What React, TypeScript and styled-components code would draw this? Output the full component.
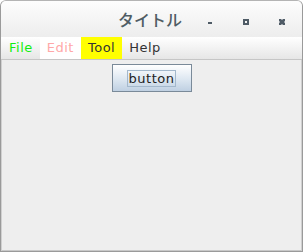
import React from 'react';
import styled, { createGlobalStyle } from 'styled-components';

const GlobalStyle = createGlobalStyle`
  html, body {
    margin: 0;
    padding: 0;
    background: #ffffff;
  }
  body {
    font-family: "DejaVu Sans", sans-serif;
  }
`;

const menus = [
  { label: 'File', color: '#11ee11', bg: 'transparent' },
  { label: 'Edit', color: '#ffa8a8', bg: '#ffffff' },
  { label: 'Tool', color: '#333333', bg: '#ffff00' },
  { label: 'Help', color: '#333333', bg: 'transparent' },
];

const App: React.FC = () => {
  return (
    <>
      <GlobalStyle />
      <Frame>
        <TitleBar>
          <Title>タイトル</Title>
          <Controls>
            <Control>
              <svg width="6" height="6" viewBox="0 0 6 6">
                <rect x="1" y="3" width="4" height="2" fill="#4f5b66" />
              </svg>
            </Control>
            <Control>
              <svg width="6" height="6" viewBox="0 0 6 6">
                <rect x="1" y="1" width="4" height="4" fill="none" stroke="#4f5b66" strokeWidth="2" />
              </svg>
            </Control>
            <Control>
              <svg width="6" height="6" viewBox="0 0 6 6">
                <path d="M0 0h2l1 1 1-1h2v2l-1 1 1 1v2h-2l-1-1-1 1h-2v-2l1-1-1-1z" fill="#4f5b66" />
              </svg>
            </Control>
          </Controls>
        </TitleBar>
        <MenuBar>
          {menus.map((m) => (
            <MenuItem key={m.label} $color={m.color} $bg={m.bg}>
              {m.label}
            </MenuItem>
          ))}
        </MenuBar>
        <Content>
          <Button>
            <FocusRing>button</FocusRing>
          </Button>
        </Content>
      </Frame>
    </>
  );
};

export default App;

// Styled components

const Frame = styled.div`
  width: 303px;
  height: 252px;
  box-sizing: border-box;
  border: 1px solid #9a9a9a;
  border-top-color: #b4b4b4;
  border-radius: 6px 6px 0 0;
  box-shadow: inset 1px 0 0 #d0d0d0, inset -1px 0 0 #d0d0d0, inset 0 -1px 0 #c8c8c8;
  background: #eeeeee;
  display: flex;
  flex-direction: column;
  overflow: hidden;
`;

const TitleBar = styled.div`
  height: 36px;
  flex-shrink: 0;
  position: relative;
  display: flex;
  align-items: center;
  justify-content: flex-end;
  background: linear-gradient(to bottom, #fdfdfd, #ededed);
`;

const Title = styled.div`
  position: absolute;
  left: 117px;
  top: 6px;
  font-family: "Noto Sans CJK JP", sans-serif;
  font-size: 16px;
  font-weight: 500;
  color: #4f5c64;
  line-height: 24px;
`;

const Controls = styled.div`
  display: flex;
  padding-right: 2px;
  padding-top: 6px;
`;

const Control = styled.div`
  width: 36px;
  height: 8px;
  display: flex;
  align-items: center;
  justify-content: center;
`;

const MenuBar = styled.div`
  height: 22px;
  flex-shrink: 0;
  display: flex;
  padding-left: 1px;
  background: linear-gradient(to bottom, #ffffff, #e6e6e6);
  border-bottom: 1px solid #c6c6c6;
`;

const MenuItem = styled.div<{ $color: string; $bg: string }>`
  padding: 0 7px;
  font-family: "DejaVu Sans", sans-serif;
  font-size: 13px;
  letter-spacing: 0.5px;
  line-height: 22px;
  color: ${(p) => p.$color};
  background: ${(p) => p.$bg};
`;

const Content = styled.div`
  flex: 1;
  display: flex;
  justify-content: center;
  align-items: flex-start;
  padding-top: 4px;
`;

const Button = styled.div`
  width: 80px;
  height: 28px;
  box-sizing: border-box;
  border: 1px solid #7a8a99;
  background: linear-gradient(to bottom, #ffffff, #dde7f1 55%, #bfd0e2);
  display: flex;
  align-items: center;
  justify-content: center;
`;

const FocusRing = styled.div`
  border: 1px solid #a3b8cc;
  padding: 0 1px;
  font-family: "DejaVu Sans", sans-serif;
  font-size: 13px;
  letter-spacing: 0.5px;
  line-height: 15px;
  color: #222222;
`;
